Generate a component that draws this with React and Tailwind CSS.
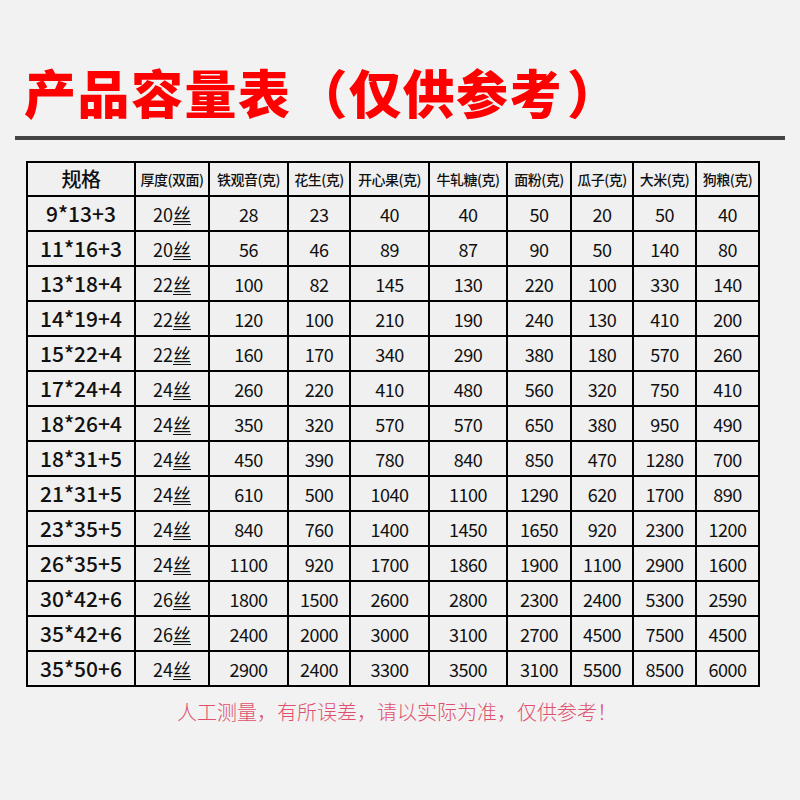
import React from "react";

const headers = ["规格", "厚度(双面)", "铁观音(克)", "花生(克)", "开心果(克)", "牛轧糖(克)", "面粉(克)", "瓜子(克)", "大米(克)", "狗粮(克)"];
const widths = ["w-[108px]", "w-[74px]", "w-[79px]", "w-[62px]", "w-[79px]", "w-[78px]", "w-[64px]", "w-[62px]", "w-[63px]", "w-[63px]"];

const rows = [
  ["9*13+3", "20", 28, 23, 40, 40, 50, 20, 50, 40],
  ["11*16+3", "20", 56, 46, 89, 87, 90, 50, 140, 80],
  ["13*18+4", "22", 100, 82, 145, 130, 220, 100, 330, 140],
  ["14*19+4", "22", 120, 100, 210, 190, 240, 130, 410, 200],
  ["15*22+4", "22", 160, 170, 340, 290, 380, 180, 570, 260],
  ["17*24+4", "24", 260, 220, 410, 480, 560, 320, 750, 410],
  ["18*26+4", "24", 350, 320, 570, 570, 650, 380, 950, 490],
  ["18*31+5", "24", 450, 390, 780, 840, 850, 470, 1280, 700],
  ["21*31+5", "24", 610, 500, 1040, 1100, 1290, 620, 1700, 890],
  ["23*35+5", "24", 840, 760, 1400, 1450, 1650, 920, 2300, 1200],
  ["26*35+5", "24", 1100, 920, 1700, 1860, 1900, 1100, 2900, 1600],
  ["30*42+6", "26", 1800, 1500, 2600, 2800, 2300, 2400, 5300, 2590],
  ["35*42+6", "26", 2400, 2000, 3000, 3100, 2700, 4500, 7500, 4500],
  ["35*50+6", "24", 2900, 2400, 3300, 3500, 3100, 5500, 8500, 6000],
];

const font = { fontFamily: '"Noto Sans CJK SC", "Noto Sans", sans-serif' };

export default function App() {
  return (
    <div className="w-[800px] h-[800px] bg-[#f2f2f2] overflow-hidden" style={font}>
      {/* Title */}
      <div className="pt-[62px] pl-[24px]">
        <h1 className="text-[52px] leading-[60px] font-black text-[#ff0000] tracking-[1.5px] whitespace-nowrap">
          产品容量表<span className="ml-[4px]">（</span>仅供参考<span className="ml-[4px]">）</span>
        </h1>
      </div>
      <div className="mx-[15px] mt-[14px] h-[4px] bg-[#444444]" />

      {/* Table */}
      <table className="ml-[26px] mt-[21px] table-fixed border-collapse bg-[#f0f0f0] text-[#111]">
        <colgroup>
          {widths.map((w, i) => (
            <col key={i} className={w} />
          ))}
        </colgroup>
        <thead>
          <tr className="h-[34px]">
            {headers.map((h, i) => (
              <th
                key={h}
                className={`border-2 border-black p-0 whitespace-nowrap tracking-[-0.5px] font-medium ${
                  i === 0 ? "text-[20px]" : "text-[14px]"
                }`}
              >
                {h}
              </th>
            ))}
          </tr>
        </thead>
        <tbody>
          {rows.map((r) => (
            <tr key={r[0]} className="h-[35px]">
              <td className="border-2 border-black text-center text-[21px] font-medium p-0 leading-none">{r[0]}</td>
              <td className="border-2 border-black text-center text-[18px] p-0 leading-none">
                {r[1]}
                <span className="underline underline-offset-2">丝</span>
              </td>
              {r.slice(2).map((v, i) => (
                <td key={i} className="border-2 border-black text-center text-[18px] p-0 leading-none tracking-[-0.5px]">
                  {v}
                </td>
              ))}
            </tr>
          ))}
        </tbody>
      </table>

      <p className="mt-[10px] text-center text-[20px] font-light text-[#e0506e] pr-[6px]">
        人工测量，有所误差，请以实际为准，仅供参考！
      </p>
    </div>
  );
}
